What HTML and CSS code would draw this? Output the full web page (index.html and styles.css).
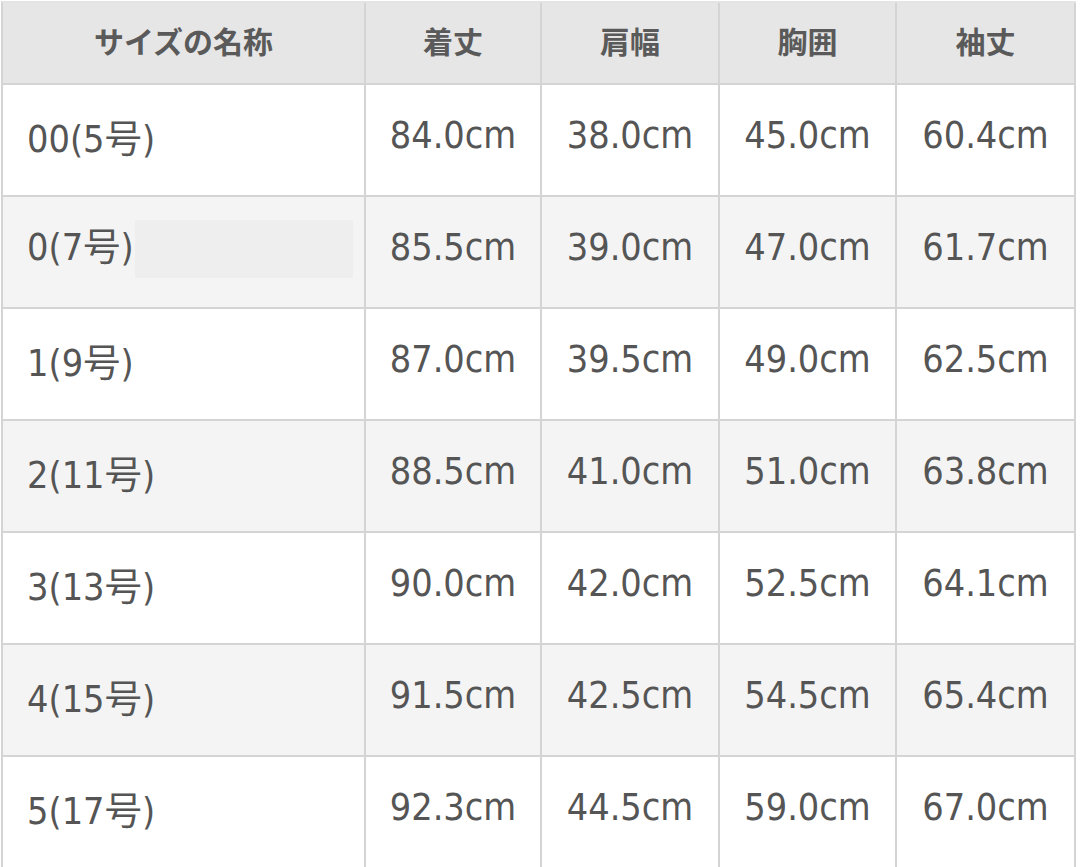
FILE: index.html
```html
<!DOCTYPE html>
<html lang="ja">
<head>
<meta charset="utf-8">
<title>サイズ表</title>
<link rel="stylesheet" href="styles.css">
</head>
<body>
<table class="size-table">
  <colgroup>
    <col class="c-name">
    <col class="c-len">
    <col class="c-shoulder">
    <col class="c-chest">
    <col class="c-sleeve">
  </colgroup>
  <thead>
    <tr>
      <th>サイズの名称</th>
      <th>着丈</th>
      <th>肩幅</th>
      <th>胸囲</th>
      <th>袖丈</th>
    </tr>
  </thead>
  <tbody>
    <tr>
      <td class="name">00(5号)</td>
      <td>84.0cm</td><td>38.0cm</td><td>45.0cm</td><td>60.4cm</td>
    </tr>
    <tr class="alt">
      <td class="name">0(7号)<span class="blank"></span></td>
      <td>85.5cm</td><td>39.0cm</td><td>47.0cm</td><td>61.7cm</td>
    </tr>
    <tr>
      <td class="name">1(9号)</td>
      <td>87.0cm</td><td>39.5cm</td><td>49.0cm</td><td>62.5cm</td>
    </tr>
    <tr class="alt">
      <td class="name">2(11号)</td>
      <td>88.5cm</td><td>41.0cm</td><td>51.0cm</td><td>63.8cm</td>
    </tr>
    <tr>
      <td class="name">3(13号)</td>
      <td>90.0cm</td><td>42.0cm</td><td>52.5cm</td><td>64.1cm</td>
    </tr>
    <tr class="alt">
      <td class="name">4(15号)</td>
      <td>91.5cm</td><td>42.5cm</td><td>54.5cm</td><td>65.4cm</td>
    </tr>
    <tr>
      <td class="name">5(17号)</td>
      <td>92.3cm</td><td>44.5cm</td><td>59.0cm</td><td>67.0cm</td>
    </tr>
  </tbody>
</table>
</body>
</html>
```

FILE: styles.css
```css
html, body {
  margin: 0;
  padding: 0;
  background: #ffffff;
}

body {
  padding: 1px 0 0 1px;
  font-family: "DejaVu Sans Condensed", "DejaVu Sans", "Noto Sans CJK JP", sans-serif;
  color: #555555;
}

.size-table {
  border-collapse: separate;
  border-spacing: 0;
  table-layout: fixed;
  width: 1075px;
  border-left: 2px solid #d4d4d4;
  border-top: 2px solid #e4e4e4;
}

.c-name { width: 363px; }
.c-len { width: 176px; }
.c-shoulder { width: 178px; }
.c-chest { width: 177px; }
.c-sleeve { width: 179px; }

.size-table th,
.size-table td {
  border-right: 2px solid #d4d4d4;
  border-bottom: 2px solid #d4d4d4;
  padding: 0;
  box-sizing: border-box;
  text-align: center;
  vertical-align: middle;
}

.size-table th {
  height: 82px;
  background: #e6e6e6;
  font-family: "Noto Sans CJK JP", sans-serif;
  font-weight: 700;
  font-size: 30px;
  color: #5a5a5a;
  padding-bottom: 6px;
}

.size-table td {
  height: 112px;
  font-size: 37.5px;
  padding-bottom: 10px;
  white-space: nowrap;
}

.size-table td.name {
  text-align: left;
  padding-left: 24px;
}

.size-table tr.alt td {
  background: #f4f4f4;
}

.blank {
  display: inline-block;
  width: 218px;
  height: 58px;
  margin-left: 1px;
  background: #eeeeee;
  vertical-align: middle;
}
```
